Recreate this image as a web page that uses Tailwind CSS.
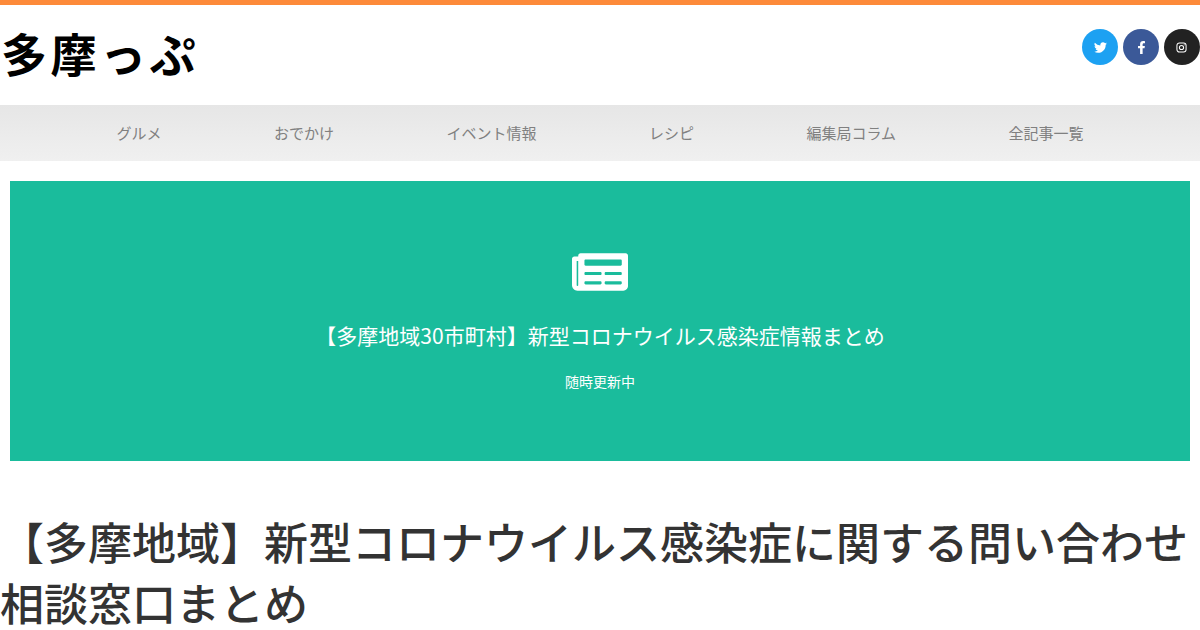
<!DOCTYPE html>
<html lang="ja"><head><meta charset="utf-8"><script src="https://cdn.jsdelivr.net/npm/@tailwindcss/browser@4"></script></head>
<body class="bg-white overflow-hidden font-['Noto_Sans_CJK_JP','Noto_Sans',sans-serif]">
<div class="w-[1200px] h-[630px] overflow-hidden">
<div class="h-[5px] bg-[#fd8a3a]"></div>
<header class="h-[100px] flex justify-between">
  <div class="pl-px pt-[17px] text-[46px] leading-[60px] font-bold text-black tracking-[3.5px]">多摩っぷ</div>
  <div class="flex gap-[5px] pt-[24px]">
    <div class="w-9 h-9 rounded-full bg-[#1da1f2] flex items-center justify-center">
      <svg viewBox="0 0 24 24" class="w-[13px] h-[13px]" fill="#fff"><path d="M23.95 4.57a10 10 0 0 1-2.82.77 4.96 4.96 0 0 0 2.16-2.72 9.9 9.9 0 0 1-3.12 1.18 4.92 4.92 0 0 0-8.38 4.48A13.98 13.98 0 0 1 1.64 3.16a4.9 4.9 0 0 0 1.52 6.57 4.9 4.9 0 0 1-2.23-.61v.06a4.92 4.92 0 0 0 3.95 4.83 5 5 0 0 1-2.21.08 4.94 4.94 0 0 0 4.6 3.42A9.87 9.87 0 0 1 0 19.54a14 14 0 0 0 7.56 2.21c9.05 0 14-7.5 14-13.98q0-.32-.02-.63a10 10 0 0 0 2.46-2.55z"/></svg>
    </div>
    <div class="w-9 h-9 rounded-full bg-[#3b5998] flex items-center justify-center">
      <svg viewBox="0 0 320 512" class="w-[13px] h-[13px]" fill="#fff"><path d="M279.14 288l14.22-92.66h-88.91v-60.13c0-25.35 12.42-50.06 52.24-50.06h40.42V6.26S260.43 0 225.36 0c-73.22 0-121.08 44.38-121.08 124.72v70.62H22.89V288h81.39v224h100.17V288z"/></svg>
    </div>
    <div class="w-9 h-9 rounded-full bg-[#222] flex items-center justify-center">
      <svg viewBox="0 0 24 24" class="w-[11px] h-[11px] -translate-x-px" fill="none" stroke="#fff" stroke-width="2.2"><rect x="2" y="2" width="20" height="20" rx="5.5"/><circle cx="12" cy="12" r="4.6"/><circle cx="17.8" cy="6.2" r="1.2" fill="#fff" stroke="none"/></svg>
    </div>
  </div>
</header>
<nav class="h-14 bg-gradient-to-b from-[#e6e6e6] to-[#f0f0f0] flex items-center justify-center gap-[112.5px] text-[15px] text-[#808080]">
  <span>グルメ</span><span>おでかけ</span><span>イベント情報</span><span>レシピ</span><span>編集局コラム</span><span>全記事一覧</span>
</nav>
<section class="mx-2.5 mt-5 h-[280px] bg-[#1abc9c] flex flex-col items-center text-white pt-[66px]">
  <svg viewBox="0 0 576 512" class="w-[56px] h-[50px]" fill="#fff"><path d="M552 64H88c-13.255 0-24 10.745-24 24v8H24c-13.255 0-24 10.745-24 24v272c0 30.928 25.072 56 56 56h472c26.51 0 48-21.49 48-48V88c0-13.255-10.745-24-24-24zM56 400a8 8 0 0 1-8-8V144h16v248a8 8 0 0 1-8 8zm236-16H140c-6.627 0-12-5.373-12-12v-8c0-6.627 5.373-12 12-12h152c6.627 0 12 5.373 12 12v8c0 6.627-5.373 12-12 12zm208 0H348c-6.627 0-12-5.373-12-12v-8c0-6.627 5.373-12 12-12h152c6.627 0 12 5.373 12 12v8c0 6.627-5.373 12-12 12zm-208-96H140c-6.627 0-12-5.373-12-12v-8c0-6.627 5.373-12 12-12h152c6.627 0 12 5.373 12 12v8c0 6.627-5.373 12-12 12zm208 0H348c-6.627 0-12-5.373-12-12v-8c0-6.627 5.373-12 12-12h152c6.627 0 12 5.373 12 12v8c0 6.627-5.373 12-12 12zm0-96H140c-6.627 0-12-5.373-12-12v-40c0-6.627 5.373-12 12-12h360c6.627 0 12 5.373 12 12v40c0 6.627-5.373 12-12 12z"/></svg>
  <h2 class="mt-[22px] text-[21px] leading-[32px] font-normal">【多摩地域30市町村】新型コロナウイルス感染症情報まとめ</h2>
  <p class="mt-[20px] text-[14px] leading-[20px]">随時更新中</p>
</section>
<h1 class="mt-[50px] text-[44px] leading-[61px] font-medium text-[#333]">【多摩地域】新型コロナウイルス感染症に関する問い合わせ相談窓口まとめ</h1>
</div>
</body></html>
